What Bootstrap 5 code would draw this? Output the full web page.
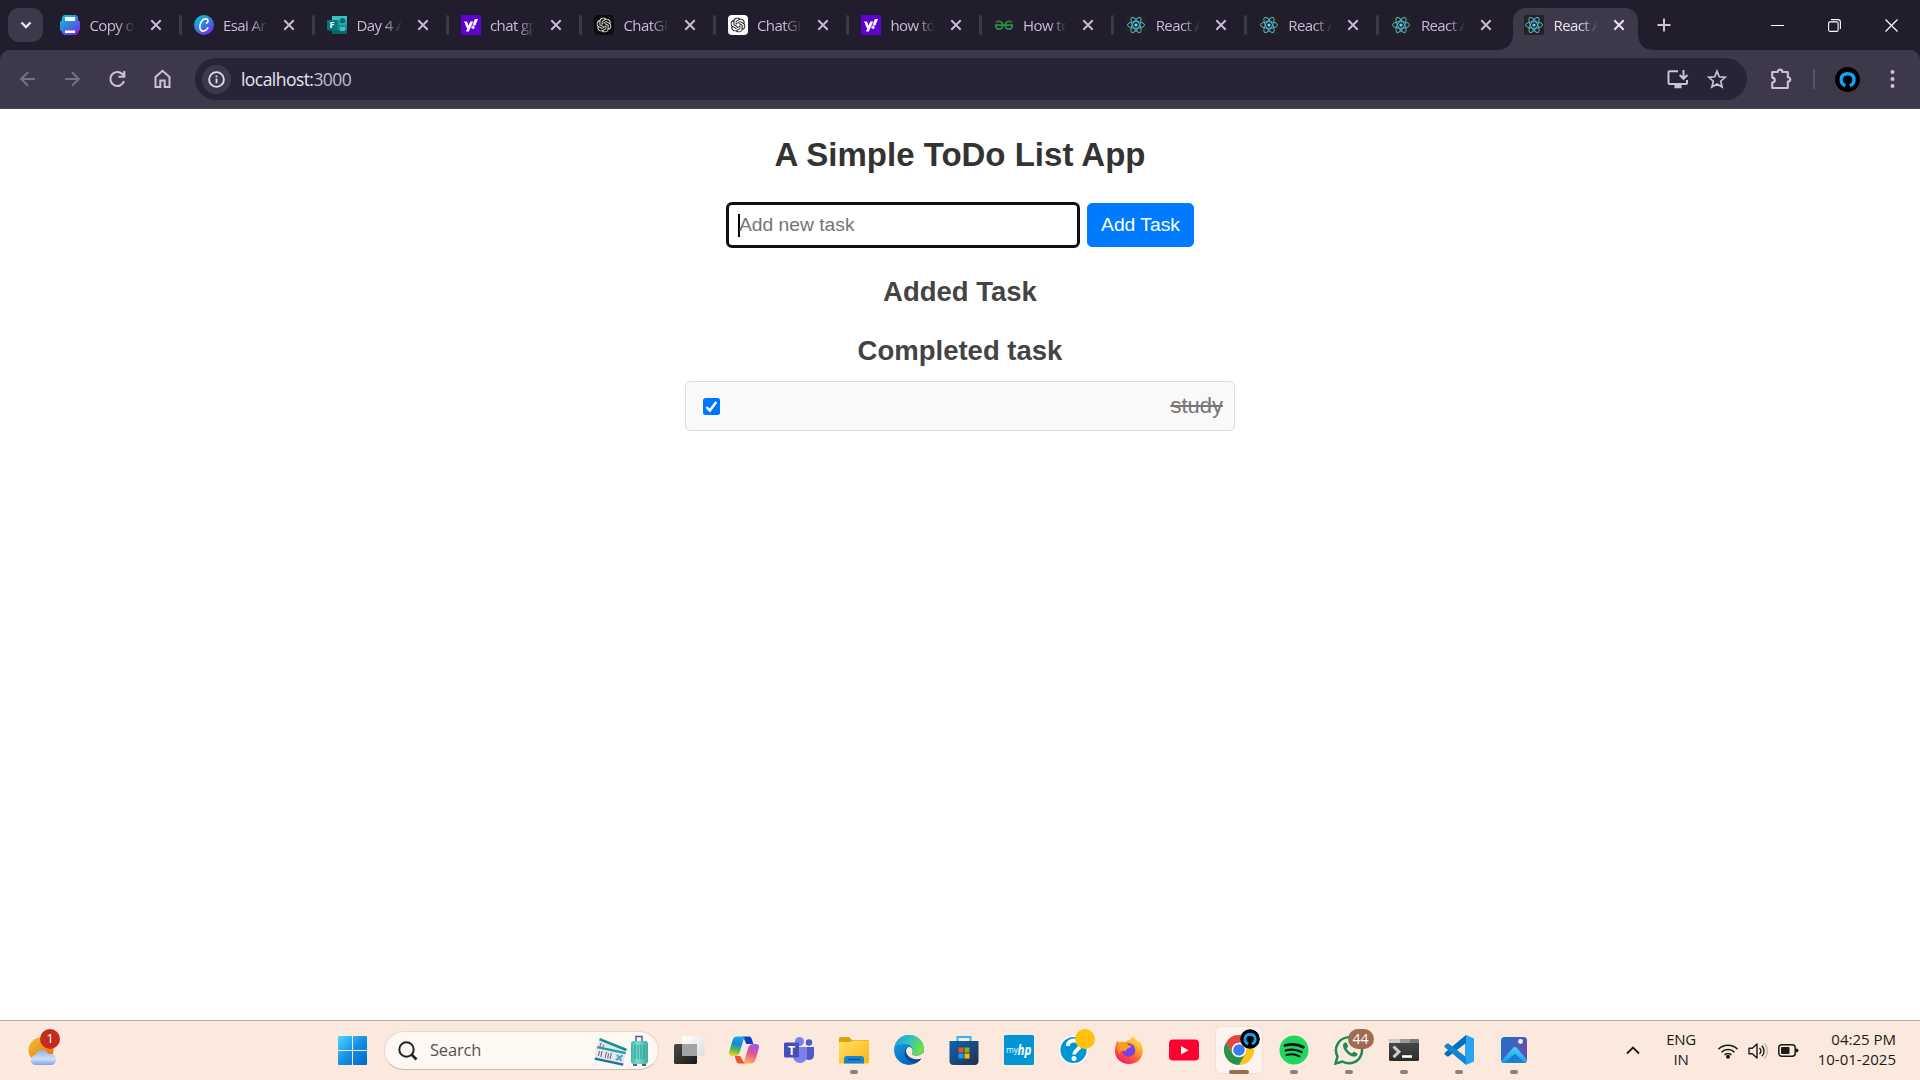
<!DOCTYPE html>
<html lang="en">
<head>
<meta charset="utf-8">
<title>React App</title>
<link href="https://cdn.jsdelivr.net/npm/bootstrap@5.3.0/dist/css/bootstrap.min.css" rel="stylesheet">
<style>
:root{--strip:#211d2d;--bar:#3d394b;--omni:#282437;--ui:"Open Sans","Noto Sans",sans-serif;}
body{width:1920px;height:1080px;overflow:hidden;background:#fff;font-family:"Liberation Sans",Arial,sans-serif}
svg{display:block;flex:none}
.defs{position:absolute}
/* tab strip */
.strip{height:50px;background:var(--strip);font-family:var(--ui);padding-left:8px}
.tabsearch{width:35px;height:34px;border-radius:11px;background:var(--bar)}
.tabs{padding-left:2px}
.btab{width:132.6px;height:50px;padding:0 17px 0 15px;position:relative;color:#c5bdd3;flex:none}
.btab:nth-child(-n+6){width:133.5px}
.btab::after{content:"";position:absolute;right:-3px;top:15px;width:3px;height:20px;border-radius:2px;background:var(--bar)}
.btab:nth-last-child(-n+2)::after{display:none}
.btab .ttl{width:46px;margin-left:9.5px;font-size:15px;letter-spacing:-.6px;line-height:20px;height:20px;overflow:hidden;white-space:nowrap;-webkit-mask-image:linear-gradient(90deg,#000 60%,transparent 100%);mask-image:linear-gradient(90deg,#000 60%,transparent 100%)}
.btab .x{margin-left:15px}
.btab.on{color:#e8e3ee}
.btab.on::before{content:"";position:absolute;left:4.5px;top:8px;width:125px;height:42px;background:var(--bar);border-radius:13px 13px 0 0}
.btab.on>*{position:relative}
.flare{position:absolute!important;bottom:0;width:14px;height:14px}
.flare.l{left:-9.5px;background:radial-gradient(circle at 0 0,transparent 13.5px,var(--bar) 14px)}
.flare.r{left:129.5px;background:radial-gradient(circle at 100% 0,transparent 13.5px,var(--bar) 14px)}
/* toolbar */
.tool-wrap{background:var(--strip)}
.tool{height:59px;background:var(--bar);border-radius:10px 10px 0 0;border-bottom:1px solid #4d4857;padding:0 17px 0 17px;color:#cbc2d8}
.navset{width:178px}
.omni{width:1552px;height:42px;border-radius:21px;background:var(--omni);padding:0 17px 0 7px}
.info{width:29px;height:29px;background:var(--bar)}
.url{font-family:var(--ui);font-size:17.5px;letter-spacing:-.55px;color:#e9e4ef;margin-left:10px;line-height:40px}
.url span{color:#c3bccd}
.vsep{width:2px;height:20px;background:#57516a}
/* page */
.view{height:911px;padding-top:24px}
.view h1{font-size:33px;font-weight:700;color:#333;line-height:44px;margin:0 0 26px}
.view h2{font-size:27.5px;font-weight:700;color:#444;line-height:34px}
.taskinput{width:350px;height:42px;outline:3px solid #101010;outline-offset:-1px;border-radius:4px;padding:0 10px;font-size:19.25px;color:#757575}
.caret{width:2px;height:23px;background:#000;margin-right:-1px}
.btn.add{--bs-btn-font-size:19.25px;--bs-btn-bg:#007bff;--bs-btn-border-color:#007bff;--bs-btn-border-radius:5px;width:107px;height:44px;white-space:nowrap;padding:0}
.doneitem{width:550px;height:50px;background:#f9f9f9;border:1px solid #ddd;border-radius:5px;padding:0 11px 0 17px}
.doneitem span{font-size:22px;color:#777;line-height:26px}
/* taskbar */
.tbar{height:60px;background:#fae9dc;border-top:1px solid #bda9a2;font-family:var(--ui);color:#1c1a1a}
.app{width:55px;height:59px;position:relative;flex:none}
.app svg.ic{margin-top:-1px}
.run::after{content:"";position:absolute;left:23.5px;bottom:6px;width:8px;height:4px;border-radius:2px;background:#8c8078}
.app.act::before{content:"";position:absolute;left:3.5px;top:5px;width:48px;height:48px;border-radius:6px;background:#fdf4ee;border:1px solid #f0e0d6}
.app.act svg{position:relative}
.app.act::after{left:17.5px;width:20px;background:#9f6b52}
.bdg{position:absolute;height:20px;min-width:20px;border-radius:10px;color:#fff;font-size:13.5px;line-height:19px;text-align:center;z-index:2}
.sbox{width:275px;height:39px;border-radius:20px;background:#fef8f3;border:1px solid #ead8cd;border-bottom-color:#cdb9ae;padding:0 10px 0 13px}
.sbox span{font-size:16.5px;letter-spacing:-.2px;color:#565150;margin-left:12px}
.tray{font-size:15px;line-height:20px;letter-spacing:-.3px}
.clock{margin-left:18px;width:79px;white-space:nowrap;letter-spacing:0;padding-bottom:4px}
</style>
<script src="https://cdn.jsdelivr.net/npm/bootstrap@5.3.0/dist/js/bootstrap.bundle.min.js"></script>
</head>
<body class="d-flex flex-column">
<svg class="defs" width="0" height="0">
<defs>
<linearGradient id="gCanva" x1="0" y1="0" x2=".7" y2="1"><stop stop-color="#00d4cf"/><stop offset=".5" stop-color="#2f86e0"/><stop offset="1" stop-color="#7d2ae8"/></linearGradient>
<linearGradient id="gWin" x1="0" y1="0" x2="1" y2="1"><stop stop-color="#4fd6ff"/><stop offset=".5" stop-color="#1390e3"/><stop offset="1" stop-color="#0067c9"/></linearGradient>
<linearGradient id="gSun" x1="0" y1="0" x2="1" y2="1"><stop stop-color="#edc531"/><stop offset="1" stop-color="#f3610a"/></linearGradient>
<linearGradient id="gCloud" x1="0" y1="0" x2="0" y2="1"><stop stop-color="#8fb0e8"/><stop offset=".6" stop-color="#cfe0f8"/><stop offset="1" stop-color="#7ba2e6"/></linearGradient>
<linearGradient id="gTv" x1="0" y1="0" x2="1" y2="1"><stop stop-color="#4b4a48"/><stop offset="1" stop-color="#1a1a1a"/></linearGradient>
<linearGradient id="gTv2" x1="0" y1="0" x2="1" y2="1"><stop stop-color="#ffffff"/><stop offset="1" stop-color="#dedede"/></linearGradient>
<linearGradient id="gCo1" x1=".4" y1="0" x2=".2" y2="1"><stop stop-color="#1aa7f0"/><stop offset=".35" stop-color="#1186dd"/><stop offset=".65" stop-color="#52b45c"/><stop offset="1" stop-color="#ffd028"/></linearGradient>
<linearGradient id="gCo2" x1=".6" y1="0" x2=".3" y2="1"><stop stop-color="#a05bea"/><stop offset=".45" stop-color="#e6518c"/><stop offset="1" stop-color="#ffb25c"/></linearGradient>
<linearGradient id="gFold" x1="0" y1="0" x2="1" y2="1"><stop stop-color="#ffdf66"/><stop offset="1" stop-color="#fbb616"/></linearGradient>
<linearGradient id="gE1" x1="0" y1="0" x2="1" y2=".4"><stop stop-color="#1d9bdc"/><stop offset=".5" stop-color="#2fbfc2"/><stop offset="1" stop-color="#6be04c"/></linearGradient>
<linearGradient id="gE2" x1="0" y1="0" x2=".6" y2="1"><stop stop-color="#1ba5e3"/><stop offset="1" stop-color="#0563b9"/></linearGradient>
<linearGradient id="gStore" x1="0" y1="0" x2="1" y2="1"><stop stop-color="#0a66b4"/><stop offset="1" stop-color="#2a2c4c"/></linearGradient>
<linearGradient id="gFx" x1=".8" y1="0" x2=".2" y2="1"><stop stop-color="#fff14a"/><stop offset=".4" stop-color="#ff9a25"/><stop offset=".75" stop-color="#ff4047"/><stop offset="1" stop-color="#e3128b"/></linearGradient>
<linearGradient id="gTerm" x1="0" y1="0" x2="0" y2="1"><stop stop-color="#4d4d4d"/><stop offset="1" stop-color="#2b2b2b"/></linearGradient>
<linearGradient id="gPh" x1="0" y1="0" x2="1" y2=".6"><stop stop-color="#1574d1"/><stop offset="1" stop-color="#6f4bab"/></linearGradient>
<linearGradient id="gPh2" x1=".5" y1="0" x2=".3" y2="1"><stop stop-color="#46d2fb"/><stop offset="1" stop-color="#159bea"/></linearGradient>
<linearGradient id="gBag" x1="0" y1="0" x2="1" y2="0"><stop stop-color="#3fb8aa"/><stop offset=".4" stop-color="#7bdccb"/><stop offset="1" stop-color="#3aaea1"/></linearGradient>
<symbol id="react" viewBox="0 0 20 20"><rect width="20" height="20" rx="2" fill="#222322"/><g fill="none" stroke="#55b9d2" stroke-width=".95"><ellipse cx="10" cy="10" rx="8.5" ry="3.3"/><ellipse cx="10" cy="10" rx="8.5" ry="3.3" transform="rotate(60 10 10)"/><ellipse cx="10" cy="10" rx="8.5" ry="3.3" transform="rotate(120 10 10)"/></g><circle cx="10" cy="10" r="1.6" fill="#61dafb"/></symbol>
<symbol id="yah" viewBox="0 0 20 20"><rect width="20" height="20" fill="#6001d2"/><path d="M3 6.400h3l1.600 4.200 1.700-4.200h2.900L7.800 16.600H5l1.200-2.800zM13.800 4H17l-2.600 6.400h-2.900z" fill="#fff"/><circle cx="12" cy="12.300" r="1.600" fill="#fff"/></symbol>
<symbol id="knot" viewBox="0 0 24 24"><path d="M22.2819 9.8211a5.9847 5.9847 0 0 0-.5157-4.9108 6.0462 6.0462 0 0 0-6.5098-2.9A6.0651 6.0651 0 0 0 4.9807 4.1818a5.9847 5.9847 0 0 0-3.9977 2.9 6.0462 6.0462 0 0 0 .7427 7.0966 5.98 5.98 0 0 0 .511 4.9107 6.051 6.051 0 0 0 6.5146 2.9001A5.9847 5.9847 0 0 0 13.2599 24a6.0557 6.0557 0 0 0 5.7718-4.2058 5.9894 5.9894 0 0 0 3.9977-2.9001 6.0557 6.0557 0 0 0-.7475-7.0729zm-9.022 12.6081a4.4755 4.4755 0 0 1-2.8764-1.0408l.1419-.0804 4.7783-2.7582a.7948.7948 0 0 0 .3927-.6813v-6.7369l2.02 1.1686a.071.071 0 0 1 .038.052v5.5826a4.504 4.504 0 0 1-4.4945 4.4944zm-9.6607-4.1254a4.4708 4.4708 0 0 1-.5346-3.0137l.142.0852 4.783 2.7582a.7712.7712 0 0 0 .7806 0l5.8428-3.3685v2.3324a.0804.0804 0 0 1-.0332.0615L9.74 19.9502a4.4992 4.4992 0 0 1-6.1408-1.6464zM2.3408 7.8956a4.485 4.485 0 0 1 2.3655-1.9728V11.6a.7664.7664 0 0 0 .3879.6765l5.8144 3.3543-2.0201 1.1685a.0757.0757 0 0 1-.071 0l-4.8303-2.7865A4.504 4.504 0 0 1 2.3408 7.872zm16.5963 3.8558L13.1038 8.364 15.1192 7.2a.0757.0757 0 0 1 .071 0l4.8303 2.7913a4.4944 4.4944 0 0 1-.6765 8.1042v-5.6772a.79.79 0 0 0-.407-.667zm2.0107-3.0231l-.142-.0852-4.7735-2.7818a.7759.7759 0 0 0-.7854 0L9.409 9.2297V6.8974a.0662.0662 0 0 1 .0284-.0615l4.8303-2.7866a4.4992 4.4992 0 0 1 6.6802 4.66zM8.3065 12.863l-2.02-1.1638a.0804.0804 0 0 1-.038-.0567V6.0742a4.4992 4.4992 0 0 1 7.3757-3.4537l-.142.0805L8.704 5.459a.7948.7948 0 0 0-.3927.6813zm1.0976-2.3654l2.602-1.4998 2.6069 1.4998v2.9994l-2.5974 1.4997-2.6067-1.4997Z"/></symbol>
<symbol id="cls" viewBox="0 0 12 12"><path d="M1.300 1.300l9.400 9.400M10.700 1.300l-9.400 9.400" stroke="currentColor" stroke-width="2"/></symbol>
<symbol id="avatar" viewBox="0 0 25 25"><circle cx="12.500" cy="12.500" r="12.500" fill="#000"/><path d="M10.300 18.800C4.200 16 4.800 6.800 12.600 6.800s8.400 9.200 2.300 12" fill="none" stroke="#0ea5f5" stroke-width="3.400"/></symbol>
</defs>
</svg>

<header class="strip d-flex align-items-start">
  <div class="tabsearch d-flex align-items-center justify-content-center mt-2"><svg width="12" height="8" viewBox="0 0 12 8"><path d="M1.500 1.500L6 6l4.500-4.500" fill="none" stroke="#eeeaf3" stroke-width="2.300"/></svg></div>
  <nav class="tabs d-flex">
    <div class="btab d-flex align-items-center"><svg width="20" height="20" viewBox="0 0 20 20"><path d="M4 0h12l2 2v3l2 2v8l-2 2v1l-2 2H4l-2-2v-1l-2-2V7l2-2V2z" fill="url(#gCanva)"/><path d="M5 2h10v4H5zM5 15.500h10V18H5z" fill="#fff"/></svg><span class="ttl">Copy of</span><svg class="x" width="12" height="12"><use href="#cls"/></svg></div>
    <div class="btab d-flex align-items-center"><svg width="20" height="20" viewBox="0 0 20 20"><circle cx="10" cy="10" r="10" fill="url(#gCanva)"/><path d="M12.500 8.200c2.600-1.500 1.600-4.900-1.200-4.400-4 .700-6.500 6.900-5.100 10.300 1.500 3.400 5.500 2.300 7.600-1.300" fill="none" stroke="#fff" stroke-width="1.600" stroke-linecap="round"/></svg><span class="ttl">Esai Ara</span><svg class="x" width="12" height="12"><use href="#cls"/></svg></div>
    <div class="btab d-flex align-items-center"><svg width="20" height="20" viewBox="0 0 20 20"><path d="M5 1h15v18H5z" fill="#1a8f91"/><path d="M5 1h15v4H5z" fill="#37c3c5"/><path d="M12 5h8v5h-8z" fill="#27a4a6"/><path d="M5 15h15v4H5z" fill="#0b6466"/><circle cx="15.500" cy="5.500" r="2.600" fill="#0b6466"/><path d="M13 12h5v4h-5z" fill="#3cc0c0"/><rect y="5" width="10.500" height="10.500" rx="1" fill="#03787c"/><text x="2.500" y="13.400" font-size="9" font-weight="700" fill="#fff" font-family="Open Sans">F</text></svg><span class="ttl">Day 4 As</span><svg class="x" width="12" height="12"><use href="#cls"/></svg></div>
    <div class="btab d-flex align-items-center"><svg width="20" height="20"><use href="#yah"/></svg><span class="ttl">chat gpt</span><svg class="x" width="12" height="12"><use href="#cls"/></svg></div>
    <div class="btab d-flex align-items-center"><svg width="20" height="20"><rect width="20" height="20" rx="4" fill="#0d0d0d"/><use href="#knot" x="2.500" y="2.500" width="15" height="15" fill="#e8e8e8"/></svg><span class="ttl">ChatGPT</span><svg class="x" width="12" height="12"><use href="#cls"/></svg></div>
    <div class="btab d-flex align-items-center"><svg width="20" height="20"><rect width="20" height="20" rx="4" fill="#fff"/><use href="#knot" x="2.500" y="2.500" width="15" height="15" fill="#111"/></svg><span class="ttl">ChatGPT</span><svg class="x" width="12" height="12"><use href="#cls"/></svg></div>
    <div class="btab d-flex align-items-center"><svg width="20" height="20"><use href="#yah"/></svg><span class="ttl">how to c</span><svg class="x" width="12" height="12"><use href="#cls"/></svg></div>
    <div class="btab d-flex align-items-center"><svg width="20" height="20" viewBox="0 0 20 20"><path d="M1 10.200h18M2 7.500C4 5.300 8.700 6 8.700 10.200c0 5-6.400 5.200-7.200.300M18 7.500c-2-2.200-6.700-1.500-6.700 2.700 0 5 6.400 5.200 7.200.300" fill="none" stroke="#2f8d46" stroke-width="1.700"/></svg><span class="ttl">How to c</span><svg class="x" width="12" height="12"><use href="#cls"/></svg></div>
    <div class="btab d-flex align-items-center"><svg width="20" height="20"><use href="#react"/></svg><span class="ttl">React Ap</span><svg class="x" width="12" height="12"><use href="#cls"/></svg></div>
    <div class="btab d-flex align-items-center"><svg width="20" height="20"><use href="#react"/></svg><span class="ttl">React Ap</span><svg class="x" width="12" height="12"><use href="#cls"/></svg></div>
    <div class="btab d-flex align-items-center"><svg width="20" height="20"><use href="#react"/></svg><span class="ttl">React Ap</span><svg class="x" width="12" height="12"><use href="#cls"/></svg></div>
    <div class="btab on d-flex align-items-center"><i class="flare l"></i><i class="flare r"></i><svg width="20" height="20"><use href="#react"/></svg><span class="ttl">React Ap</span><svg class="x" width="12" height="12"><use href="#cls"/></svg></div>
  </nav>
  <svg style="margin:18px 0 0 15px" width="14" height="14" viewBox="0 0 14 14"><path d="M7 .5v13M.5 7h13" stroke="#cbc2d8" stroke-width="2"/></svg>
  <div class="ms-auto d-flex align-items-center h-100" style="gap:44px;padding-right:22px">
    <svg width="13" height="13"><path d="M0 6.500h13" stroke="#fff"/></svg>
    <svg width="13" height="13" viewBox="0 0 13 13"><rect x=".6" y="2.900" width="9.500" height="9.500" rx="1.500" fill="none" stroke="#fff" stroke-width="1.100"/><path d="M3 .6h7a2.500 2.500 0 0 1 2.400 2.400v7" fill="none" stroke="#fff" stroke-width="1.100"/></svg>
    <svg width="13" height="13" viewBox="0 0 13 13"><path d="M.5.5l12 12M12.500.5l-12 12" stroke="#fff" stroke-width="1.200"/></svg>
  </div>
</header>

<div class="tool-wrap">
<div class="tool d-flex align-items-center">
  <div class="navset d-flex align-items-center" style="gap:24px">
    <svg width="21" height="20" viewBox="0 0 21 20" fill="none" stroke="#777186" stroke-width="2"><path d="M18 10H4.500M11 3.200L4.200 10l6.800 6.800"/></svg>
    <svg width="21" height="20" viewBox="0 0 21 20" fill="none" stroke="#777186" stroke-width="2"><path d="M3 10h13.500M10 3.200l6.800 6.800-6.800 6.800"/></svg>
    <svg width="21" height="20" viewBox="0 0 21 20" fill="none" stroke="currentColor" stroke-width="2.100"><path d="M17 12.200A7 7 0 1 1 15.300 5l2 2.200M17.300 2v5.800h-5.800"/></svg>
    <svg width="21" height="20" viewBox="0 0 21 20" fill="none" stroke="currentColor" stroke-width="2"><path d="M3.500 18V8l7-6.200 7 6.200v10h-4.800v-6.500H8.300V18z"/></svg>
  </div>
  <div class="omni d-flex align-items-center">
    <span class="info rounded-circle d-flex align-items-center justify-content-center"><svg width="17" height="17" viewBox="0 0 17 17"><circle cx="8.500" cy="8.500" r="7.400" fill="none" stroke="#e3ddea" stroke-width="1.800"/><path d="M8.500 7.600v4.600M8.500 4.500v1.800" stroke="#e3ddea" stroke-width="1.800"/></svg></span>
    <span class="url">localhost:<span>3000</span></span>
    <svg class="ms-auto me-3" width="25" height="20" viewBox="0 0 25 20" fill="none" stroke="#cbc2d8" stroke-width="2"><path d="M13 2.200H4.500a1 1 0 0 0-1 1V14a1 1 0 0 0 1 1H21a1 1 0 0 0 1-1v-3M18.500 1v8.500M14.700 6l3.800 3.800L22.500 6"/><path d="M9.500 17.500h7" stroke-width="3.500"/></svg>
    <svg style="margin-right:2px" width="22" height="20" viewBox="0 0 22 20"><path d="M11 2.300l2.300 5.500 5.900.5-4.500 3.900 1.400 5.800-5.100-3.100L5.900 18l1.400-5.800-4.500-3.900 5.900-.5z" fill="none" stroke="#cbc2d8" stroke-width="1.700"/></svg>
  </div>
  <svg style="margin-left:22px" width="24" height="22" viewBox="0 0 24 22"><path d="M3.200 4h5.500c0-3.200 4.600-3.200 4.600 0h5.500v5.200c3.300.2 3.300 4.200 0 4.400V20H3.200v-5.400c3.500-.4 3.500-4.600 0-5z" fill="none" stroke="currentColor" stroke-width="2.100" stroke-linejoin="round"/></svg>
  <span class="vsep" style="margin-left:20px"></span>
  <svg style="margin-left:20px" width="25" height="25"><use href="#avatar"/></svg>
  <svg style="margin-left:30px" width="5" height="18" viewBox="0 0 5 18" fill="currentColor"><circle cx="2.500" cy="2" r="2"/><circle cx="2.500" cy="9" r="2"/><circle cx="2.500" cy="16" r="2"/></svg>
</div>
</div>

<main class="view text-center">
  <h1>A Simple ToDo List App</h1>
  <div class="d-flex justify-content-center align-items-center" style="gap:9px;padding-left:2px">
    <div class="taskinput d-flex align-items-center"><i class="caret"></i><span>Add new task</span></div>
    <button class="btn btn-primary add">Add Task</button>
  </div>
  <h2 style="margin:28px 0 25px">Added Task</h2>
  <h2 style="margin:0 0 13px">Completed task</h2>
  <div class="doneitem mx-auto d-flex align-items-center justify-content-between">
    <svg width="17" height="17" viewBox="0 0 17 17"><rect width="17" height="17" rx="2.500" fill="#0075ff"/><path d="M3.500 9l3.300 3.500 6.500-8.500" fill="none" stroke="#fff" stroke-width="2.500"/></svg>
    <span class="text-decoration-line-through">study</span>
  </div>
</main>

<footer class="tbar d-flex align-items-center">
  <div style="width:338px;padding-left:28px" class="position-relative">
    <svg width="30" height="30" viewBox="0 0 30 30"><circle cx="13" cy="14" r="12.500" fill="url(#gSun)"/><path d="M8 29a5 5 0 0 1-.500-10C9 12.800 18 12.500 20 18c5-1.500 8 2 8 5.500S25.500 29 23 29z" fill="url(#gCloud)"/></svg>
    <span class="bdg" style="left:40px;top:-7px;background:#c42b1c">1</span>
  </div>
  <svg width="29" height="29" viewBox="0 0 29 29" fill="url(#gWin)"><path d="M1 0h13v14H0V1a1 1 0 0 1 1-1zM15 0h13a1 1 0 0 1 1 1v13H15zM0 15h14v14H1a1 1 0 0 1-1-1zM15 15h14v13a1 1 0 0 1-1 1H15z"/></svg>
  <div class="sbox d-flex align-items-center" style="margin-left:17px">
    <svg width="20" height="20" viewBox="0 0 20 20" fill="none" stroke="#222"><circle cx="8.500" cy="8.500" r="7.200" stroke-width="2"/><path d="M13.500 13.500l5 5" stroke-width="2.600"/></svg>
    <span>Search</span>
    <svg class="ms-auto" width="54" height="31" viewBox="0 0 54 31">
      <g transform="translate(6 3) rotate(22)"><rect width="29" height="13" fill="#e6e3ea"/><path d="M0 0h29v2.500H0z" fill="#148d9b"/><path d="M3 4v6M6 5v4" stroke="#62616d"/></g>
      <g transform="translate(3.500 11) rotate(12)"><rect width="29" height="14" fill="#e9e4ec"/><path d="M0 0h29v2.200H0z" fill="#1aa0a4"/><path d="M0 11.800h29v2.200H0z" fill="#14739f"/><path d="M3 4.500v5M5.500 4v6M10 4v6M12.500 5v5M15 4v6" stroke="#62616d"/><path d="M21 4.500l5.500 5M26.500 4l-5.500 6" stroke="#4ba6d2" stroke-width="2"/></g>
      <path d="M42 8V1.500h6V8" fill="none" stroke="#585c82" stroke-width="1.500"/><rect x="37" y="6" width="17" height="23" rx="3" fill="url(#gBag)"/><path d="M41 10v14M44 10v14M47 10v14M50 10v14" stroke="#2e9b91"/><path d="M39 30h4M48 30h4" stroke="#585c82" stroke-width="2"/>
    </svg>
  </div>
  <div class="d-flex" style="margin-left:2.500px">
    <div class="app d-flex align-items-center justify-content-center"><svg class="ic" width="31" height="30" viewBox="0 0 31 30"><rect y="9" width="23" height="20" rx="1.500" fill="url(#gTv)"/><rect x="8" y="1" width="22.500" height="20" rx="1" fill="url(#gTv2)"/><path d="M8 9h15v12H8z" fill="#a3a3a3"/></svg></div>
    <div class="app d-flex align-items-center justify-content-center"><svg class="ic" width="30" height="30" viewBox="0 0 30 30"><path d="M14 1.500h6c2 0 2.700 2 3.300 4l1 3.500h-7z" fill="#123ec4"/><path d="M8 1.500h9c-2 1-2.500 3-3.200 5.500l-3 10C10 20 8 21 6 21H3c-3 0-3.500-2-2.500-5.500l3-10C4.300 2.800 5.500 1.500 8 1.500z" fill="url(#gCo1)"/><path d="M22 28.500h-9c2-1 2.500-3 3.200-5.500l3-10C20 10 22 9 24 9h3c3 0 3.500 2 2.500 5.500l-3 10c-.8 2.700-2 4-4.500 4z" fill="url(#gCo2)"/><path d="M16 28.500h-6c-2 0-2.700-2-3.300-4L5.700 21h5.500l2.800 5z" fill="#ef4f32"/></svg></div>
    <div class="app d-flex align-items-center justify-content-center"><svg class="ic" width="30" height="30" viewBox="0 0 30 30"><circle cx="15.500" cy="6.500" r="4.500" fill="#7b83eb"/><circle cx="25" cy="7.500" r="3.200" fill="#5059c9"/><path d="M20 12h10v8c0 4-3 5-5 5s-4-1-5-3z" fill="#5059c9"/><path d="M9 12h14v9c0 4-3 7-7 7s-7-3-7-7z" fill="#7b83eb"/><rect y="7.500" width="15" height="15" rx="1.500" fill="#464eb8"/><text x="4" y="19.500" font-family="Open Sans" font-weight="700" font-size="12.500" fill="#fff">T</text></svg></div>
    <div class="app run d-flex align-items-center justify-content-center"><svg class="ic" width="30" height="30" viewBox="0 0 30 30"><path d="M0 4a2 2 0 0 1 2-2h8l3 3h15a2 2 0 0 1 2 2v6H0z" fill="#e0a008"/><path d="M0 7h11l3-1.500h16V27a1.500 1.500 0 0 1-1.500 1.500h-27A1.500 1.500 0 0 1 0 27z" fill="url(#gFold)"/><path d="M5 28.500V24a3 3 0 0 1 3-3h14a3 3 0 0 1 3 3v4.500z" fill="#1585d4"/><path d="M9 24.500h12" stroke="#0b4f93" stroke-width="1.200"/></svg></div>
    <div class="app d-flex align-items-center justify-content-center"><svg class="ic" width="30" height="30" viewBox="0 0 30 30"><circle cx="15" cy="15" r="14.900" fill="url(#gE2)"/><path d="M.3 12.500C2 4.500 8 0 15 0c8.500 0 15 6.300 15 13.200 0 4.500-3.500 7.300-7.500 7.300-3.500 0-5.200-1.300-4.500-2.500 2.500-4-1-9-7-9C6 9 2 10.500.3 12.500z" fill="url(#gE1)"/><path d="M12.500 12.500c-4 5-1.500 13 6 15 3.500.8 7-1 8.800-4-6 2.500-15 1-14.800-11z" fill="#104a96"/><path d="M18 18c-.7 1.200 1 2.700 4.500 2.700 3 0 6-1.700 7.200-4.200L30 22l-3 1.700C22 25.500 12.500 23 12 16c0-2 1.500-4 3.500-4 2.800.5 4 3.500 2.500 6z" fill="#fae9dc"/><path d="M13 20c2 4.500 9 6 14.300 3.500C24 28.500 15 29.500 12 22z" fill="#104a96"/></svg></div>
    <div class="app d-flex align-items-center justify-content-center"><svg class="ic" width="30" height="30" viewBox="0 0 30 30"><path d="M8.500 8V2h13v6" fill="none" stroke="#30b5ec" stroke-width="2"/><path d="M.5 6h29v20a4 4 0 0 1-4 4h-21a4 4 0 0 1-4-4z" fill="url(#gStore)"/><path d="M9.500 12.500h5v5h-5z" fill="#f25022"/><path d="M15.500 12.500h5v5h-5z" fill="#7fba00"/><path d="M9.500 18.500h5v5h-5z" fill="#00a4ef"/><path d="M15.500 18.500h5v5h-5z" fill="#ffb900"/></svg></div>
    <div class="app d-flex align-items-center justify-content-center"><svg class="ic" width="30" height="30" viewBox="0 0 30 30"><rect width="30" height="30" rx="1.500" fill="#0096d6"/><text x="2" y="18" font-family="Open Sans" font-size="8.500" fill="#fff" textLength="12">my</text><text x="13.500" y="19.500" font-family="Open Sans" font-weight="700" font-style="italic" font-size="13.500" fill="#fff" textLength="14" lengthAdjust="spacingAndGlyphs">hp</text></svg></div>
    <div class="app d-flex align-items-center justify-content-center"><svg class="ic" width="30" height="30" viewBox="0 0 30 30"><circle cx="14.500" cy="15" r="13.800" fill="#0096d6" stroke="#fff" stroke-width="1.400"/><path d="M8.800 11c0-7.500 12-7 12-.5 0 4.500-5.600 4.500-5.600 9" fill="none" stroke="#fff" stroke-width="4"/><circle cx="15" cy="23.500" r="2.500" fill="#fff"/></svg><span class="bdg" style="left:28.500px;top:8px;background:#ffc10a"></span></div>
    <div class="app d-flex align-items-center justify-content-center"><svg class="ic" width="30" height="30" viewBox="0 0 30 30"><path d="M3.500 5.500c.5 1 1 1.500 2 2 2-1 4-1 6-.5C14 5 17 4.500 16.500 4 17.500 2 19 1 19.500.5c0 3 3 4 5 6.500l1-1c3 4 3.500 8 3 12C27.500 25 22 29 15 29 7 29 1 23.500 1 16c0-4 1-7 2.500-10.500z" fill="url(#gFx)"/><circle cx="14.500" cy="15" r="6.800" fill="#7542e5"/><path d="M5 8c4-1 7-.5 9.500 2 1 .7 2 .5 3 1-1 2-3 2-4 2.500s-1 2-2 2.500c-4-1-6 0-6 3-3-3-3-8-.5-11z" fill="#ff9a25"/></svg></div>
    <div class="app d-flex align-items-center justify-content-center"><svg class="ic" width="30" height="30" viewBox="0 0 30 30"><rect y="4.500" width="30" height="21" rx="4" fill="#ff0033"/><path d="M12 11v8.500l7.500-4.250z" fill="#fff"/></svg></div>
    <div class="app run act d-flex align-items-center justify-content-center"><svg class="ic" width="30" height="30" viewBox="0 0 30 30"><path d="M2 7.500A15 15 0 0 1 28 7.500H15L9 19z" fill="#e8453c"/><path d="M28 7.500A15 15 0 0 1 15 30l6-11.500L21.500 7.500z" fill="#fcc419"/><path d="M2 7.500A15 15 0 0 0 15 30l6.200-11H9z" fill="#2b9348"/><circle cx="15" cy="15" r="7.300" fill="#fff"/><circle cx="15" cy="15" r="5.800" fill="#3b7ded"/></svg><svg class="bdg" style="position:absolute;left:28.500px;top:8px" width="20" height="20"><use href="#avatar"/></svg></div>
    <div class="app run d-flex align-items-center justify-content-center"><svg class="ic" width="30" height="30" viewBox="0 0 30 30"><circle cx="15" cy="15" r="14.500" fill="#1ed760"/><g fill="none" stroke="#111" stroke-linecap="round"><path d="M6 10.500c6-1.800 13-1.200 18.500 1.700" stroke-width="2.800"/><path d="M6.700 15.500c5.500-1.600 11-1 15.800 1.600" stroke-width="2.300"/><path d="M7.500 20c4.500-1.300 9-.8 13 1.400" stroke-width="1.900"/></g></svg></div>
    <div class="app run d-flex align-items-center justify-content-center"><svg class="ic" width="30" height="30" viewBox="0 0 30 30"><path d="M1.500 28.500l2-7.200a13 13 0 1 1 5 5.200z" fill="none" stroke="#1f8b52" stroke-width="2.500"/><path d="M10 8c-4 4 5 15 11.500 13.500 2-.5 2.500-2.500 1.500-3.200L20 16.500l-2 2c-2.500-1-4.500-3-5.500-5.200l1.800-1.800L13 8.500C12.500 7.500 11 7 10 8z" fill="#1f8b52"/></svg><span class="bdg" style="left:26px;top:8px;width:26px;background:#9f6b52;font-size:14px">44</span></div>
    <div class="app run d-flex align-items-center justify-content-center"><svg class="ic" width="30" height="30" viewBox="0 0 30 30"><rect y="4" width="30" height="22" rx="1.500" fill="url(#gTerm)"/><path d="M0 8V5.500A1.500 1.500 0 0 1 1.500 4H11v4z" fill="#ccc"/><path d="M11 4h10v4H11z" fill="#999"/><path d="M21 4h7.500A1.500 1.500 0 0 1 30 5.500V8h-9z" fill="#777"/><path d="M4.500 11.500l5.500 5.300-5.500 5.300" fill="none" stroke="#ccc" stroke-width="3"/><path d="M13 21.500h10" stroke="#fff" stroke-width="2.600"/></svg></div>
    <div class="app run d-flex align-items-center justify-content-center"><svg class="ic" width="30" height="30" viewBox="0 0 30 30"><path d="M22 0l8 3.500v23L22 30l-1-7V7z" fill="#26a6f0"/><path d="M22 0v8L4.500 21.500H3L.5 19.300V18z" fill="#0070bd"/><path d="M22 30v-8L4.500 8.500H3L.5 10.700V12z" fill="#1184d2"/></svg></div>
    <div class="app run d-flex align-items-center justify-content-center"><svg class="ic" width="30" height="30" viewBox="0 0 30 30"><rect x="2" y="2" width="26" height="26" rx="3.500" fill="url(#gPh)"/><path d="M2.500 25.500L14 13q2-2 4 0l9.700 11.500v1A3 3 0 0 1 25 28H5q-2 0-2.500-2.500z" fill="url(#gPh2)"/><path d="M5 28l11-9.500L26 28z" fill="#1a7fd8"/><circle cx="21.500" cy="6.500" r="2.400" fill="#f3f4fb"/></svg></div>
  </div>
  <div class="tray ms-auto d-flex align-items-center text-center" style="padding-right:24px">
    <svg width="14" height="9" viewBox="0 0 14 9"><path d="M1 7.500l6-6 6 6" fill="none" stroke="#1c1a1a" stroke-width="1.800"/></svg>
    <div class="pb-1" style="width:32px;margin-left:25px">ENG<br>IN</div>
    <svg style="margin-left:20px" width="22" height="16" viewBox="0 0 22 16" fill="none" stroke="#1c1a1a" stroke-width="1.600"><path d="M1.500 6.200a13.500 13.500 0 0 1 19 0M4.500 9.200a9.300 9.300 0 0 1 13 0M7.500 12a5 5 0 0 1 7 0"/><circle cx="11" cy="13.800" r="1.200" fill="#1c1a1a"/></svg>
    <svg style="margin-left:9px" width="21" height="18" viewBox="0 0 21 18" fill="none" stroke="#1c1a1a" stroke-width="1.400"><path d="M1 6.300h3.300L9 2v14l-4.700-4.300H1z" stroke-linejoin="round"/><path d="M11.500 6c1.700 1.800 1.700 4.200 0 6M13.800 3.700c3 3 3 7.600 0 10.600"/><path d="M16.300 1.500c4.200 4.200 4.200 10.800 0 15" stroke="#c9bdb4"/></svg>
    <svg style="margin-left:9px" width="21" height="13" viewBox="0 0 21 13"><rect x=".8" y=".8" width="16.400" height="11.400" rx="3" fill="none" stroke="#1c1a1a" stroke-width="1.500"/><rect x="3" y="3" width="8.500" height="7" rx="1" fill="#1c1a1a"/><path d="M18 4.500q2.500 0 2.500 2t-2.500 2z" fill="#1c1a1a"/></svg>
    <div class="clock text-end">04:25 PM<br>10-01-2025</div>
  </div>
</footer>
</body>
</html>
